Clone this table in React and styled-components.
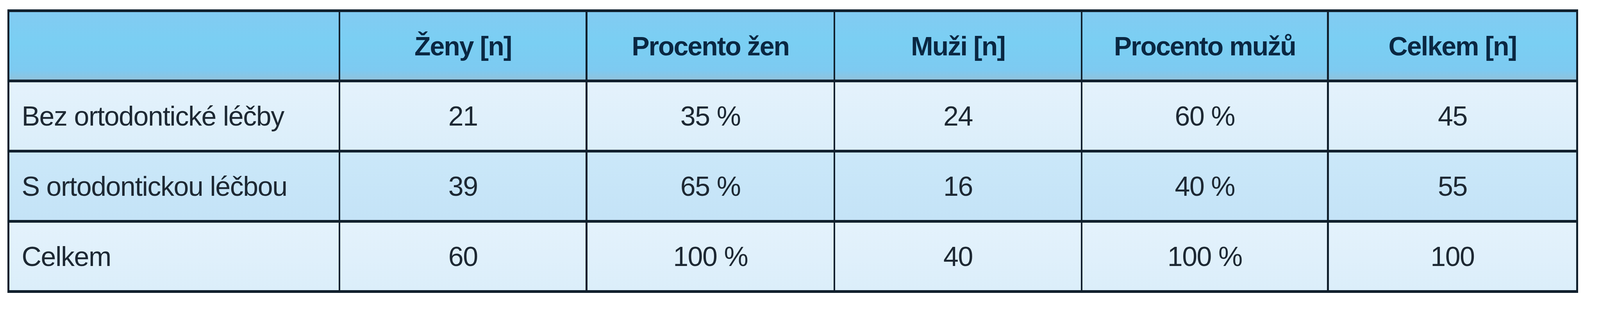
import React from 'react'
import styled, { createGlobalStyle } from 'styled-components'

// horizontal unit: the reference is 5984px wide, the window may be narrower
const GlobalStyle = createGlobalStyle`
  html, body {
    margin: 0;
    padding: 0;
    background: #ffffff;
  }
  body {
    font-family: "Liberation Sans", Arial, sans-serif;
    --u: calc(100vw / 5984);
  }
`;

// --- Styled Components ---
const Page = styled.div`
  padding: 24px 0 0 calc(28 * var(--u));
`;

const Table = styled.div`
  display: grid;
  grid-template-columns:
    calc(1231 * var(--u)) calc(917 * var(--u)) calc(920 * var(--u))
    calc(918 * var(--u)) calc(914 * var(--u)) calc(925 * var(--u));
  grid-auto-rows: 173px;
  row-gap: 7px;
  column-gap: calc(7 * var(--u));
  padding: 7px calc(7 * var(--u));
  width: fit-content;
  background: #11202d;
`;

const HeadCell = styled.div`
  display: flex;
  align-items: center;
  justify-content: center;
  background: linear-gradient(180deg, #82cbf2 0%, #7acff3 45%, #7dcaf1 86%, #8fc3dd 100%);
  color: #0a2742;
  font-size: 68px;
  font-weight: 700;
  letter-spacing: -2px;
  white-space: nowrap;
`;

const Cell = styled.div`
  display: flex;
  align-items: center;
  justify-content: ${({ $label }) => ($label ? 'flex-start' : 'center')};
  padding-left: ${({ $label }) => ($label ? 'calc(46 * var(--u))' : '0')};
  background: ${({ $alt }) =>
    $alt
      ? 'linear-gradient(180deg, #cbe8f9 0%, #c4e3f7 100%)'
      : 'linear-gradient(180deg, #e4f2fc 0%, #dbeefa 100%)'};
  color: #1d2833;
  font-size: 70px;
  font-weight: 400;
  letter-spacing: -1.5px;
  white-space: nowrap;
`;

const headers = ['', 'Ženy [n]', 'Procento žen', 'Muži [n]', 'Procento mužů', 'Celkem [n]'];

const rows = [
  ['Bez ortodontické léčby', '21', '35 %', '24', '60 %', '45'],
  ['S ortodontickou léčbou', '39', '65 %', '16', '40 %', '55'],
  ['Celkem', '60', '100 %', '40', '100 %', '100'],
];

export default function App() {
  return (
    <>
      <GlobalStyle />
      <Page>
        <Table>
          {headers.map((h, i) => (
            <HeadCell key={'h' + i}>{h}</HeadCell>
          ))}
          {rows.map((row, r) =>
            row.map((value, c) => (
              <Cell key={r + '-' + c} $label={c === 0} $alt={r === 1}>
                {value}
              </Cell>
            ))
          )}
        </Table>
      </Page>
    </>
  );
}
